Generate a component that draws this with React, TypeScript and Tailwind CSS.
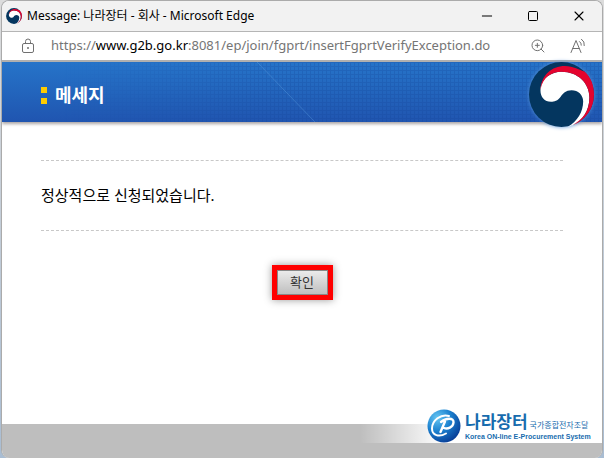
import { Minus, Square, X, ZoomIn } from "lucide-react";

interface EmblemProps {
    className: string;
}

function Emblem({ className }: EmblemProps) {
    return (
        <svg viewBox="0 0 200 198" className={className} aria-hidden="true">
            <circle cx="100" cy="99" r="99" fill="#04365f" />
            <path
                d="M36 88C36 50 70 30 100 30C150 30 185 65 185 108C185 150 162 180 134 193L120 197C148 180 166 152 166 120C166 100 150 86 131 86C112 86 105 96 98 105C88 119 78 121 68 121C48 121 36 105 36 88Z"
                fill="#fff"
            />
            <path
                d="M36 85C38 40 70 12 110 12C137 13 155 24 170 29C190 46 199 72 199 99C199 142 173 178 134 192C165 175 185 150 185 108C185 65 150 30 100 30C70 30 42 47 36 85Z"
                fill="#e4032e"
            />
        </svg>
    );
}

function LockIcon() {
    return (
        <svg
            viewBox="0 0 14 16"
            className="h-4 w-3.5 shrink-0"
            fill="none"
            stroke="#707070"
            aria-hidden="true"
        >
            <rect x="1.5" y="5.5" width="11" height="9" rx="1.5" />
            <path d="M4.5 5.5V3.5a2.5 2.5 0 0 1 5 0v2" />
            <circle cx="7" cy="10" r="1" fill="#707070" stroke="none" />
        </svg>
    );
}

function ReadAloudIcon() {
    return (
        <svg
            viewBox="0 0 16 16"
            className="size-4"
            fill="none"
            stroke="#707070"
            strokeLinecap="round"
            aria-hidden="true"
        >
            <path d="M1 14.5L6 2.5L11 14.5M2.8 10.5H9.2" />
            <path d="M9.5 3.5Q11.5 4.8 11.3 7.2M11.5 1.2Q15 3.5 14.3 7.6" />
        </svg>
    );
}

const windowButtonClassName = "flex size-4 items-center justify-center";

function TitleBar() {
    return (
        <div className="flex h-[31px] items-center border-b border-[#b5b5b5] bg-[#f2f2f2] pr-[15px] pl-1">
            <Emblem className="size-4" />

            <h1 className="ml-[5px] flex-1 text-[12px] whitespace-nowrap text-black">
                Message: 나라장터 - 회사 - Microsoft Edge
            </h1>

            <div className="flex items-center gap-[30px] text-black">
                <button
                    type="button"
                    aria-label="최소화"
                    className={windowButtonClassName}
                >
                    <Minus className="size-4" strokeWidth={1.5} />
                </button>
                <button
                    type="button"
                    aria-label="최대화"
                    className={windowButtonClassName}
                >
                    <Square className="size-3" strokeWidth={2} />
                </button>
                <button
                    type="button"
                    aria-label="닫기"
                    className={windowButtonClassName}
                >
                    <X className="size-4" strokeWidth={1.6} />
                </button>
            </div>
        </div>
    );
}

function AddressBar() {
    return (
        <div className="flex h-[30px] items-center border-b-2 border-[#b0b0b0] bg-white pr-4 pl-[19px]">
            <LockIcon />

            <p className="ml-4 flex-1 text-[13px] whitespace-nowrap text-[#757575]">
                https://<span className="text-black">www.g2b.go.kr</span>
                :8081/ep/join/fgprt/insertFgprtVerifyException.do
            </p>

            <div className="flex items-center gap-6 text-[#707070]">
                <button type="button" aria-label="확대">
                    <ZoomIn className="size-4" strokeWidth={1.5} />
                </button>
                <button type="button" aria-label="소리내어 읽기">
                    <ReadAloudIcon />
                </button>
            </div>
        </div>
    );
}

function Banner() {
    return (
        <header className="relative h-[60px] bg-linear-to-b from-[#2674c9] to-[#2055b0] shadow-[0_2px_3px_#aaa5a5]">
            <div className="absolute inset-0 bg-[linear-gradient(90deg,#17479a_1px,transparent_1px),linear-gradient(#17479a_1px,transparent_1px)] mask-[linear-gradient(90deg,transparent_10%,#000_45%)] bg-size-[4px_4px] opacity-25" />
            <svg
                viewBox="0 0 60 60"
                className="absolute top-0 left-[255px] size-[60px]"
                aria-hidden="true"
            >
                <path d="M0 0L58 60" stroke="#5fa0e2" strokeWidth="1" opacity="0.4" />
            </svg>

            <div className="relative flex h-full items-center gap-2 pt-1.5 pl-[39px]">
                <span className="flex flex-col gap-[5px]">
                    <span className="size-[6px] bg-[#fc0]" />
                    <span className="size-[6px] bg-[#fc0]" />
                </span>
                <h2 className="text-[18px] font-bold text-white">메세지</h2>
            </div>

            <Emblem className="absolute top-0 right-[7px] h-[65px] w-[67px] drop-shadow-[0_0_2px_#5591d8]" />
        </header>
    );
}

function SiteLogo() {
    return (
        <div className="flex pl-[67px] text-[#176cae]">
            <svg
                viewBox="0 0 34 34"
                className="size-[34px] shrink-0"
                aria-hidden="true"
            >
                <defs>
                    <radialGradient id="globe" cx="0.3" cy="0.25" r="0.8">
                        <stop offset="0" stopColor="#66c6f2" />
                        <stop offset="0.5" stopColor="#1c82d0" />
                        <stop offset="1" stopColor="#083f98" />
                    </radialGradient>
                </defs>
                <circle cx="17" cy="17" r="16.5" fill="url(#globe)" />
                <g fill="none" stroke="#fff" strokeLinecap="round">
                    <path
                        d="M22 7C14 4.500 5 11.500 5 19.500C5 26.500 12 28.500 19 24.500"
                        strokeWidth="2"
                    />
                    <path
                        d="M13.500 23L18 12.500M14 13C19 8.500 27 8.500 26.500 13.500C26 18.500 20.500 20.500 17 19"
                        strokeWidth="2.400"
                    />
                </g>
            </svg>

            <div className="flex flex-col gap-0.5 pt-1 pl-1 whitespace-nowrap">
                <p className="flex items-end gap-0.5 text-[17px] leading-[18px] font-bold">
                    나라장터
                    <span className="text-[8px] leading-[12px] font-normal">
                        국가종합전자조달
                    </span>
                </p>
                <p className="font-['Liberation_Sans',sans-serif] text-[7px] leading-[8px] font-bold">
                    Korea ON-line E-Procurement System
                </p>
            </div>
        </div>
    );
}

export default function App() {
    return (
        <div className="flex min-h-screen bg-linear-to-b from-[#dcdcdc] to-[#a9bdd3] px-px font-['Noto_Sans','Noto_Sans_CJK_KR',sans-serif]">
            <div className="flex flex-1 flex-col overflow-hidden rounded-lg border border-b-0 border-[#ababab] bg-white">
                <TitleBar />
                <AddressBar />
                <Banner />

                <main className="flex-1 px-[39px] pt-[38px]">
                    <p className="border-y border-dashed border-[#c8c8c8] py-6 text-[15px] leading-[21px] text-black">
                        정상적으로 신청되었습니다.
                    </p>

                    <div className="flex justify-center pt-[34px]">
                        <button
                            type="button"
                            className="h-[35px] w-[61px] border-5 border-[#f00] bg-linear-to-b from-[#ededed] to-[#bdbdbd] text-[13px] text-[#333] shadow-[0_0_8px_#999,inset_0_0_0_1px_#888]"
                        >
                            확인
                        </button>
                    </div>
                </main>

                <footer className="flex h-[49px] justify-end bg-[linear-gradient(#fff_15px,#bebebe_15px)]">
                    <div className="h-[34px] w-[242px] bg-linear-to-r from-transparent to-white to-35%">
                        <SiteLogo />
                    </div>
                </footer>
            </div>
        </div>
    );
}
